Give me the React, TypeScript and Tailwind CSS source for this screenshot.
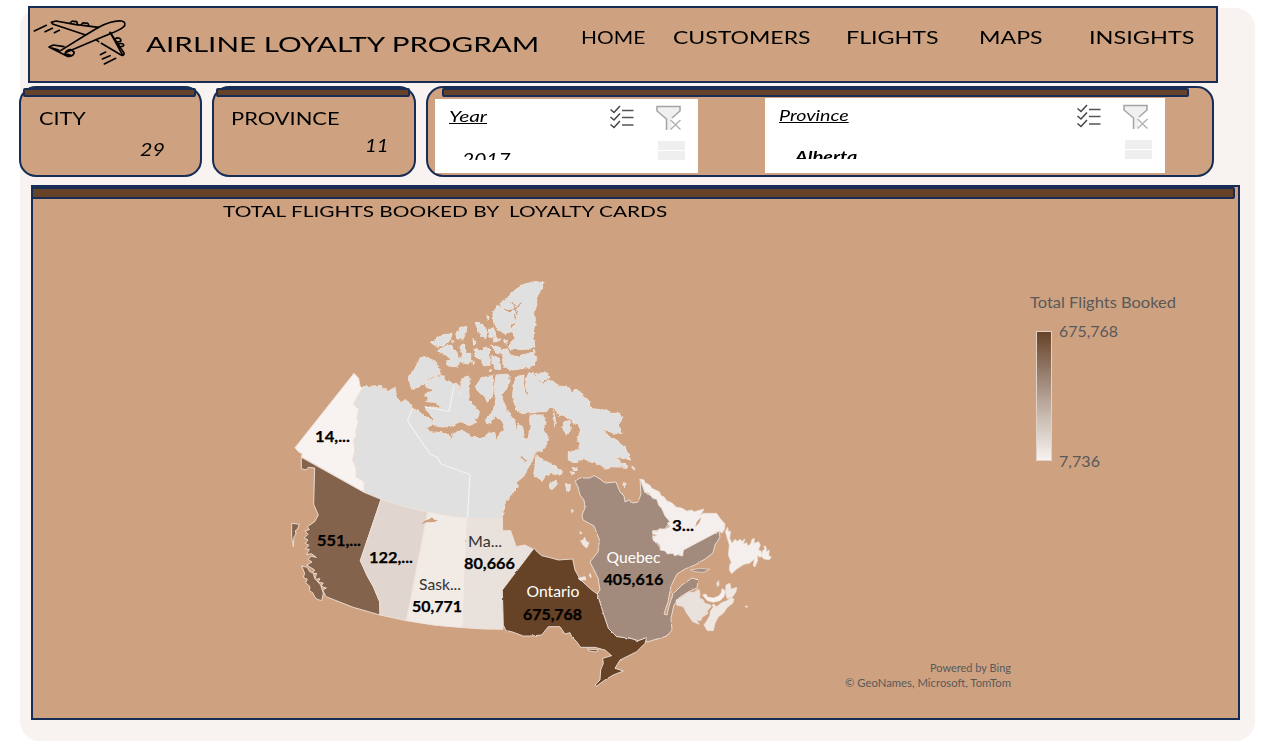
import { useLayoutEffect, useRef, useState } from "react";

const HAND = "font-['Lato',sans-serif]";

/** One line of text stretched horizontally to fill the width of its box. */
function Fit({ text, box, type }: { text: string; box: string; type: string }) {
  const ref = useRef<HTMLSpanElement>(null);
  const [scale, setScale] = useState(1);
  useLayoutEffect(() => {
    const el = ref.current;
    if (el && el.parentElement) setScale(el.parentElement.clientWidth / el.offsetWidth);
  }, []);
  return (
    <div className={`shrink-0 ${box}`}>
      <span
        ref={ref}
        className={`inline-block origin-left whitespace-pre align-top leading-none text-black ${HAND} ${type}`}
        style={{ transform: `scaleX(${scale})` }}
      >
        {text}
      </span>
    </div>
  );
}

function Plane() {
  return (
    <svg className="ml-[3px] mt-2 h-[56px] w-[96px] shrink-0" viewBox="25 20 288 168" fill="none" stroke="#000" strokeWidth="5" strokeLinecap="round" strokeLinejoin="round">
      <path d="M104 126 L183 77 L222 54 C248 40 272 33 291 35 C302 37 304 46 296 53 C285 64 260 71 240 80 L125 129" />
      <path d="M222 54 L150 45 L94 35 L80 39 L84 44 L183 77" />
      <path d="M137 42 C139 35 145 34 150 37 C157 34 159 41 157 46 M170 47 C172 40 178 39 183 42 C190 40 193 45 191 50" />
      <path d="M256 69 L298 131 C299 138 293 140 288 136 L230 102 M222 97 L214 91" />
      <path d="M257 70 L293 136 M271 89 C280 82 291 87 288 96 L278 98 M280 106 C288 99 301 104 296 110 L285 113" />
      <path d="M118 112 L86 107 L73 113 L128 141 C138 143 150 137 148 128 L138 121 M82 116 L102 122 M121 133 C124 124 132 121 138 121 M121 133 L138 138" />
      <path d="M29 65 L65 48 M61 67 L83 57 M89 70 L104 63 M227 136 L243 128 M233 149 L256 139 M239 164 L273 147" />
    </svg>
  );
}

function Checklist() {
  return (
    <svg className="h-6 w-6 shrink-0" viewBox="0 0 24 24" fill="none" stroke="#444" strokeWidth="1.5">
      <path d="M.5 4.500 4 7.500 10 1M.5 12 4 15 10 8.500M.5 19.500 4 22.500 10 16" />
      <path stroke="#555" d="M12 5.500h11.500M12 12.500h11.500M12 20h11.500" />
    </svg>
  );
}

function Funnel() {
  return (
    <svg className="h-[26px] w-[25px] shrink-0" viewBox="0 0 25 26" fill="none">
      <path d="M1 1.500h23v4.500l-8.500 7.500v11h-5v-11L1 6z" fill="#f0f0f0" />
      <path d="M16 13 24 6V1.500H1V6l9.500 8v11" stroke="#a3a3a3" strokeWidth="1.5" />
      <path d="m14.500 15 10 9.500M24.500 15l-10 9.500" stroke="#b0b0b0" strokeWidth="1.3" />
    </svg>
  );
}

function Bar({ box }: { box: string }) {
  return <div className={`border-2 border-[#172d55] bg-[#664228] ${box}`} />;
}

const CARD = "shrink-0 rounded-[17px] border-2 border-[#172d55] bg-[#cea281]";

function Slicer({ box, title, item }: { box: string; title: React.ReactNode; item: React.ReactNode }) {
  return (
    <div className={`flex shrink-0 bg-white ${box}`}>
      <div className="grow pl-[14px] pt-[9px]">
        {title}
        {item}
      </div>
      <div className="pr-[13px] pt-[6px]">
        <div className="flex justify-end gap-[22px] pr-1">
          <Checklist />
          <Funnel />
        </div>
        <div className="ml-auto mt-[10px] h-[9px] w-[27px] bg-[#efefef]" />
        <div className="ml-auto mt-px h-[9px] w-[27px] bg-[#efefef]" />
      </div>
    </div>
  );
}

const MAINLAND =
  "M362 388L364 386 367 385 370 387.500 373 384.500 377 387 380.500 385.500 381.500 390 386.500 388.500 388 391.500 395 387 396 393 397.500 398 400.500 402.500 405 400 408 401.500 413 408 419 411.500 425 417 430 417.500 434 423 432 426 426.500 427.500 428 431.500 440 432.500 448 434 450.500 441.500 452.500 434 461.500 430 466.500 433 471.500 437.500 485 437.500 487 433 495 433 496 442 498 436.500 502.500 431.500 504 424 500 419 495 416 492 421 487 424 485 419 490 416 493 410 495 404 496 398 494 388 496 375 509 374 509 385 501 396 505 405 508 413 515 421 516 432 518 424 523 428 524 437 528 440 530 427 530 415 543 415 546 422 543 430 549 438 546 446 543 450 535 452 533 460 528 467 525 475 517 482 518 487 512 493 507 500 503 512 502 520 467 520 427 514 381 502 364 494 364 481.700 356 476.700 356 468 352 460 355 450 353 440 355 432 357 418 359 409 353 404 358 396Z";

const QUEBEC =
  "M575 481L580 478 590 478 594 475.500 600 479 605 483 616 482 620 492 624 496 625 502 629 500 633 503 638 502 641 494 640 479 645 493 657 498 662 508 670 522 665 529 653 531 653 538 662 550 682 556 683 550 719 531 720 537 715 545 713 553 705 559 695 565 685 569 677 574 671 586 668 602 664 614 667 615 669 606 673 594 682 585 692 578 698 580 697 588 688 592 680 597 674 605 671 618 672 630 667 636 647 642 644 638 638 641 630 638 617 637 608 628 603 613 597 594 600 590 598 578 590 562 598 552 599.500 540 594 526 583 520 582 515 585 508 584 500 580 495 578 487Z";

function CanadaMap() {
  const label = { lengthAdjust: "spacingAndGlyphs" as const };
  return (
    <svg className="block h-[496px] w-[1205px]" viewBox="33 222 1205 496" fontFamily="Lato, sans-serif">
      <defs>
        <filter id="coast" x="-5%" y="-5%" width="110%" height="110%">
          <feTurbulence type="fractalNoise" baseFrequency="0.25" numOctaves="2" seed="4" />
          <feDisplacementMap in="SourceGraphic" scale="3.500" xChannelSelector="R" yChannelSelector="G" />
        </filter>
        <filter id="shore" x="-5%" y="-5%" width="110%" height="110%">
          <feTurbulence type="fractalNoise" baseFrequency="0.2" numOctaves="2" seed="9" />
          <feDisplacementMap in="SourceGraphic" scale="2" xChannelSelector="R" yChannelSelector="G" />
        </filter>
        <linearGradient id="legend" x1="0" y1="0" x2="0" y2="1">
          <stop offset="0" stopColor="#664228" />
          <stop offset=".4" stopColor="#a28b7c" />
          <stop offset=".62" stopColor="#c3b4a8" />
          <stop offset="1" stopColor="#f8f3f1" />
        </linearGradient>
      </defs>

      <g stroke="#efe2d9" strokeWidth=".9" strokeLinejoin="round">
        {/* territories and the arctic archipelago */}
        <g fill="#e0e0e0" filter="url(#coast)">
          <path d={MAINLAND} />
          <g transform="translate(400 270) scale(.33333)" strokeWidth="3">
            <path d="M430 38L425 60 410 80 410 110 400 130 408 155 400 180 400 205 405 230 380 238 330 238 325 230 345 205 340 190 333 180 345 160 350 140 335 125 310 120 300 100 325 80 345 60 375 42 405 35Z" />
            <path d="M296 105L312 122 338 128 345 155 330 165 335 185 315 192 290 175 280 150 280 125Z" />
            <path d="M62 262L85 265 110 275 122 312 85 325 70 345 35 358 25 320 45 295Z" />
            <path d="M93 217L130 194 155 192 155 205 130 227 112 232Z" />
            <path d="M113 243L130 232 150 225 170 245 175 265 190 258 180 230 192 222 200 250 212 250 212 272 205 282 180 277 170 290 145 288 138 275 155 268 135 255Z" />
            <path d="M222 237L240 243 250 233 268 236 270 285 250 287 245 270 225 260Z" />
            <path d="M225 157L240 158 260 180 258 205 242 197Z" />
            <path d="M265 175L280 175 292 200 270 202Z" />
            <path d="M168 190L180 172 200 170 200 180 190 207 170 205Z" />
            <path d="M275 226L300 232 307 252 290 250Z" />
            <path d="M280 205L300 207 298 215 282 215Z" />
            <path d="M276 255L298 265 302 298 285 297 276 280Z" />
            <path d="M306 240L322 236 330 255 360 262 370 250 402 250 410 275 390 292 340 300 310 292Z" />
            <path d="M312 208L322 210 320 222 312 220Z M218 205L228 220 222 225Z M260 138L267 140 265 150Z M215 272L224 275 220 284Z M154 215L163 216 158 220Z M268 298L276 300 270 303Z M400 240L405 244 402 248Z" />
          </g>
          <g transform="translate(400 365) scale(.33333)" strokeWidth="3">
            <path d="M75 125L115 128 125 122 105 112 80 110 85 100 75 85 105 75 75 66 80 48 105 38 128 30 135 45 150 50 160 58 167 52 175 60 178 95 180 60 185 42 200 35 212 42 205 60 208 105 225 125 238 140 235 155 222 162 230 172 212 180 180 170 150 185 120 185 103 182 100 160 85 145Z" />
            <path d="M226 65L245 38 277 32 280 90 262 112 255 95 240 85Z" />
          </g>
          <g transform="translate(500 360) scale(.33333)" strokeWidth="3">
            <path d="M72 45L70 70 76 98 88 112 78 75 80 48 90 40 102 42 112 62 130 72 145 60 165 65 172 78 195 80 210 85 212 97 230 90 247 100 250 112 265 118 270 140 290 150 320 150 335 160 360 160 368 175 355 195 366 220 340 220 312 207 320 225 350 240 375 260 380 275 392 300 345 290 384 322 330 320 320 328 295 310 270 305 250 295 225 308 205 300 205 275 235 272 240 250 233 240 242 210 235 195 215 180 180 160 150 140 140 155 120 155 75 160 50 150 45 135 38 110 40 75 50 50Z" />
            <path d="M108 40L140 38 150 52 125 65 112 58Z" />
            <path d="M188 190L200 182 210 185 214 210 200 222 190 210Z M160 150L166 178 160 185Z M174 155L184 165 176 172Z M162 184L168 188 165 198Z M214 184L228 187 222 194Z" />
            <path d="M108 285L125 298 140 305 165 318 168 328 185 330 180 345 150 340 135 350 125 365 115 350 100 350 105 320Z" />
            <path d="M150 370L168 362 170 375 155 390Z M200 373L211 373 209 396 200 391Z M210 335L224 338 220 345Z M218 322L234 328 228 333Z M390 315L405 325 402 330Z M370 368L378 370 376 384Z" />
          </g>
          <path fill="none" stroke="#cea281" strokeWidth="1.300" d="M504 309Q513 314 521 303M520 456L526 461M512 302L518 315" />
        </g>
        <path fill="none" stroke="#f3f3f3" strokeWidth="1.200" d="M412 409L407.500 421 430 454 437 457 441 464 470 474.500 467.500 518M425 407L449 411.500 454 385" />

        <g transform="translate(280 360) scale(.33333)" strokeWidth="2.700">
          <path fill="#f8f3f1" d="M222 40L236 55 240 78 247 85 233 108 220 132 236 148 230 175 235 185 226 215 229 225 220 240 225 270 217 300 228 325 228 350 252 365 252 397 64 290 67 281 56 276 45 263Z" />
        </g>
        <g transform="translate(280 490) scale(.33333)" strokeWidth="2.700">
          <path fill="#83634c" d="M64 -98L252 7 303 28 241 212 262 258 280 290 299 335 300 375 220 352 138 320 128 300 139 294 123 289 130 279 114 277 120 266 104 268 110 250 97 251 104 240 80 225 96 216 84 208 94 199 109 202 94 191 80 194 88 178 76 177 87 166 76 160 84 150 73 144 84 133 75 122 88 119 82 110 104 95 115 75 101 43 104 -66 85 -68 78 -60 64 -64Z" />
          <path fill="#83634c" d="M65 228L82 232 88 244 100 250 104 265 122 285 130 310 125 332 112 328 105 322 98 308 88 302 90 290 77 278 82 268 70 262 74 250Z" />
          <path fill="#83634c" d="M35 100L58 103 52 118 46 122 48 132 42 140 40 170 35 140Z" />
          <path fill="#e0d5cf" d="M303 28Q372 52 443 66L379 392 300 375 299 335 280 290 262 258 241 212Z" />
          <path fill="#f1eae5" d="M443 66Q500 78 562 84L549 413Q460 408 379 392Z" />
          <path fill="#e8e1dc" d="M562 84L667 86 668 122 692 122 705 160 708 170 735 165 760 178 667 300 669 418Q610 418 549 413Z" />
          <path fill="#cea281" stroke="none" d="M424 103L434 92 447 88 456 82 463 89 474 91 463 96 440 97Z M555 150L560 152 557 156Z" />
        </g>
        <g filter="url(#shore)">
          <path fill="#a28b7c" d={QUEBEC} />
          <g transform="translate(480 490) scale(.33333)" strokeWidth="2.700">
            <path fill="#664228" d="M162 175L172 186 185 197 210 203 235 210 278 207 285 240 300 268 335 300 352 312 370 370 385 415 410 440 450 445 475 452 500 443 495 460 470 485 420 510 405 535 430 543 400 555 375 570 350 588 345 585 360 570 362 540 370 520 368 505 395 497 375 480 345 472 302 472 290 455 275 440 270 428 255 432 240 410 205 410 185 435 150 438 130 438 95 425 78 422 70 405 67 300Z" />
            <path fill="#664228" d="M322 477L355 480 348 486 330 483Z" />
            <path fill="#eee7e2" d="M302 152L310 150 314 142 318 154 327 158 320 174 310 166Z M295 265L315 260 318 269 300 271Z M330 250L334 260 328 258Z M300 124L306 130 301 132Z M275 58L280 62 276 68Z" />
          </g>
        </g>
        <g transform="translate(620 470) scale(.33333)" strokeWidth="2">
          <path fill="#f4efec" d="M62 27L72 30 75 38 90 46 95 55 118 65 124 78 132 80 140 92 155 98 170 112 185 114 200 123 215 120 222 125 252 117 246 128 238 137 250 130 290 130 300 145 315 162 314 178 305 190 298 182 190 240 188 258 175 252 165 258 158 250 142 252 135 242 120 240 122 228 113 218 100 212 98 200 112 196 98 190 98 182 112 185 118 176 135 178 150 170 142 160 150 155 135 138 125 115 116 106 110 88 98 85 88 70 75 66Z" />
          <path fill="#f4efec" d="M316 185L323 172 326 186 332 183 329 205 336 220 345 208 352 214 360 208 366 214 375 207 370 222 380 218 384 228 392 222 396 208 403 205 402 220 416 215 421 225 415 240 422 242 428 256 420 262 412 256 413 272 405 290 400 288 403 268 388 280 372 283 350 297 335 311 328 300 329 285 334 278 325 255 328 225Z M428 242L434 238 432 228 438 230 440 245 448 240 446 256 454 262 447 270 430 266 424 258Z" />
          <path fill="#e8e1dc" d="M168 390L185 382 205 367 222 367 237 358 240 372 238 385 248 388 255 400 272 405 270 420 262 432 248 440 242 452 230 450 238 463 218 455 208 440 200 430 190 410 170 405Z" />
          <path fill="#eee7e2" d="M272 412L280 402 290 410 305 398 320 392 335 382 342 388 338 400 322 412 310 430 295 440 285 460 280 482 262 482 252 465 262 450 270 436Z M318 345L330 340 333 358 350 352 348 366 338 380 322 386 316 370Z M376 408L384 409 379 413Z M290 340L296 332 297 344 293 350Z" />
          <path fill="#f8f3f1" d="M248 375L258 372 262 381 280 384 296 378 304 368 306 356 315 362 312 380 300 392 280 397 262 392Z" />
          <path fill="#a28b7c" d="M212 300L240 295 270 298 250 307 225 305Z" />
          <path fill="#cea281" stroke="none" d="M226 170L230 155 244 142 238 158Z M265 430L280 410 276 408 262 424Z" />
        </g>
      </g>

      <g fontSize="16" fontWeight="700" fill="#000" stroke="#000" strokeWidth=".25">
        <text {...label} x="315" y="442" textLength="35">14,...</text>
        <text {...label} x="317" y="546" textLength="44">551,...</text>
        <text {...label} x="369" y="563" textLength="44">122,...</text>
        <text {...label} x="412" y="612" textLength="50">50,771</text>
        <text {...label} x="464" y="569" textLength="51">80,666</text>
        <text {...label} x="523" y="620" textLength="59">675,768</text>
        <text {...label} x="603.500" y="585" textLength="60">405,616</text>
        <text {...label} x="672" y="531" textLength="22">3...</text>
      </g>
      <g fontSize="16">
        <text {...label} x="419" y="590" textLength="42" fill="#333">Sask...</text>
        <text {...label} x="468" y="547" textLength="34" fill="#333">Ma...</text>
        <text {...label} x="526.500" y="597" textLength="53" fill="#fff">Ontario</text>
        <text {...label} x="606.500" y="563" textLength="54" fill="#fff">Quebec</text>
      </g>

      <g fill="#595959" fontSize="16">
        <text {...label} x="1030" y="308" textLength="146">Total Flights Booked</text>
        <text {...label} x="1059" y="337" textLength="59">675,768</text>
        <text {...label} x="1059" y="467" textLength="41">7,736</text>
      </g>
      <rect x="1036.500" y="331.500" width="15" height="129" fill="url(#legend)" stroke="#e0d2c8" strokeWidth="1" />
      <g fill="#595959" fontSize="11">
        <text {...label} x="930" y="672" textLength="81">Powered by Bing</text>
        <text {...label} x="845" y="687" textLength="166">© GeoNames, Microsoft, TomTom</text>
      </g>
    </svg>
  );
}

export default function App() {
  return (
    <div className="relative isolate flex h-[751px] w-[1261px] flex-col overflow-hidden bg-white">
      <div className="absolute left-5 top-2 -z-10 h-[733px] w-[1235px] rounded-[20px] bg-[#f8f3f1]" />

      <header className="ml-7 mt-[6px] flex h-[77px] w-[1190px] shrink-0 border-2 border-[#172d55] bg-[#cea281]">
        <Plane />
        <Fit text="AIRLINE LOYALTY PROGRAM" box="ml-[17px] mt-[25px] w-[393px]" type="text-[22px]" />
        <nav className="flex pt-[21px]">
          <Fit text="HOME" box="ml-[42px] w-[64px]" type="text-[17px]" />
          <Fit text="CUSTOMERS" box="ml-[28px] w-[138px]" type="text-[17px]" />
          <Fit text="FLIGHTS" box="ml-[35px] w-[93px]" type="text-[17px]" />
          <Fit text="MAPS" box="ml-[40px] w-[64px]" type="text-[17px]" />
          <Fit text="INSIGHTS" box="ml-[46px] w-[105px]" type="text-[17px]" />
        </nav>
      </header>

      <div className="ml-[19px] mt-[3px] flex h-[91px] shrink-0 gap-[10px]">
        <section className={`w-[183px] ${CARD}`}>
          <Bar box="ml-[2px] h-[9px] w-[173px] rounded-[2px]" />
          <Fit text="CITY" box="h-[17px] ml-[18px] mt-[13px] w-[47px]" type="text-[17px]" />
          <Fit text="29" box="h-[18px] ml-[119px] mt-[13px] w-[25px]" type="text-[18px] italic" />
        </section>
        <section className={`w-[204px] ${CARD}`}>
          <Bar box="ml-[2px] h-[9px] w-[194px] rounded-[2px]" />
          <Fit text="PROVINCE" box="h-[17px] ml-[17px] mt-[13px] w-[108px]" type="text-[17px]" />
          <Fit text="11" box="h-[17px] ml-[151px] mt-[10px] w-[24px]" type="text-[17px] italic" />
        </section>
        <section className={`w-[788px] ${CARD}`}>
          <Bar box="ml-[14px] h-[9px] w-[747px] rounded-[2px]" />
          <div className="ml-[7px] mt-px flex items-end">
            <Slicer
              box="h-[74px] w-[263px]"
              title={<Fit text="Year" box="h-[18px] w-[38px]" type="text-[16px] italic underline" />}
              item={
                <div className="ml-[13px] mt-[27px] h-[7px] overflow-hidden">
                  <Fit text="2017" box="w-[48px]" type="-mt-[2px] text-[17px] italic" />
                </div>
              }
            />
            <div className="w-[67px] shrink-0" />
            <Slicer
              box="h-[75px] w-[400px]"
              title={<Fit text="Province" box="h-[18px] w-[70px]" type="text-[16px] italic underline" />}
              item={
                <div className="ml-[16px] mt-[26px] h-[8px] overflow-hidden">
                  <Fit text="Alberta" box="w-[62px]" type="-mt-[2px] text-[15px] font-bold italic" />
                </div>
              }
            />
          </div>
        </section>
      </div>

      <main className="ml-[31px] mt-2 h-[535px] w-[1209px] shrink-0 border-2 border-[#172d55] bg-[#cea281]">
        <Bar box="-ml-[2px] h-3 w-[1204px] rounded-r-[2px]" />
        <div className="h-[23px] pt-1">
          <Fit text="TOTAL FLIGHTS BOOKED BY  LOYALTY CARDS" box="ml-[190px] w-[444px]" type="text-[16px]" />
        </div>
        <CanadaMap />
      </main>
    </div>
  );
}
